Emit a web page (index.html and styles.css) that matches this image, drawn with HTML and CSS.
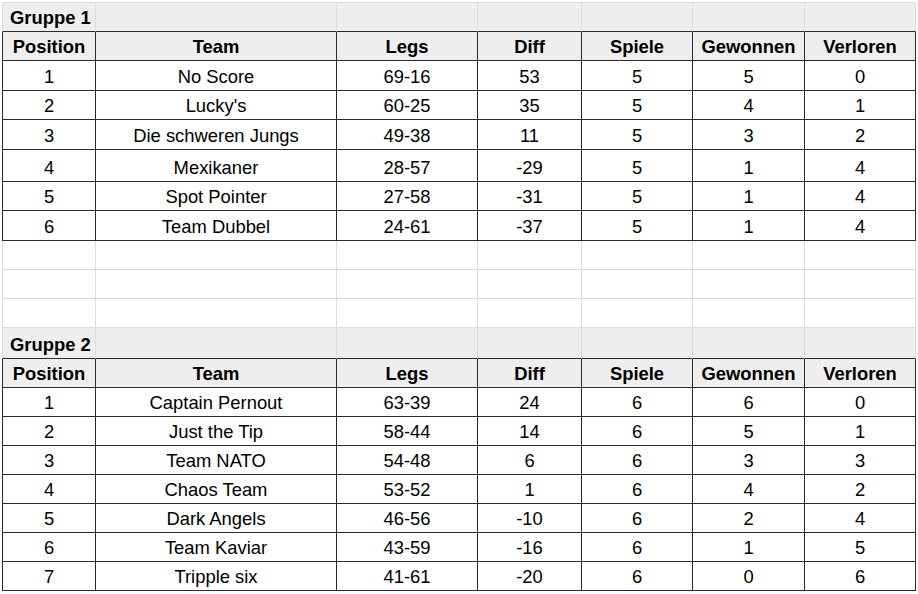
FILE: index.html
```html
<!DOCTYPE html>
<html lang="de">
<head>
<meta charset="utf-8">
<title>Gruppen</title>
<link rel="stylesheet" href="styles.css">
</head>
<body>
<div class="sheet">
  <div class="row band first h30">
    <div class="cell title">Gruppe 1</div><div class="cell"></div><div class="cell"></div><div class="cell"></div><div class="cell"></div><div class="cell"></div><div class="cell"></div>
  </div>
  <div class="row t head h29">
    <div class="cell">Position</div><div class="cell">Team</div><div class="cell">Legs</div><div class="cell">Diff</div><div class="cell">Spiele</div><div class="cell">Gewonnen</div><div class="cell">Verloren</div>
  </div>
  <div class="row t h30"><div class="cell">1</div><div class="cell">No Score</div><div class="cell">69-16</div><div class="cell">53</div><div class="cell">5</div><div class="cell">5</div><div class="cell">0</div></div>
  <div class="row t h29"><div class="cell">2</div><div class="cell">Lucky's</div><div class="cell">60-25</div><div class="cell">35</div><div class="cell">5</div><div class="cell">4</div><div class="cell">1</div></div>
  <div class="row t h30"><div class="cell">3</div><div class="cell">Die schweren Jungs</div><div class="cell">49-38</div><div class="cell">11</div><div class="cell">5</div><div class="cell">3</div><div class="cell">2</div></div>
  <div class="row t h32"><div class="cell">4</div><div class="cell">Mexikaner</div><div class="cell">28-57</div><div class="cell">-29</div><div class="cell">5</div><div class="cell">1</div><div class="cell">4</div></div>
  <div class="row t h29"><div class="cell">5</div><div class="cell">Spot Pointer</div><div class="cell">27-58</div><div class="cell">-31</div><div class="cell">5</div><div class="cell">1</div><div class="cell">4</div></div>
  <div class="row t h30"><div class="cell">6</div><div class="cell">Team Dubbel</div><div class="cell">24-61</div><div class="cell">-37</div><div class="cell">5</div><div class="cell">1</div><div class="cell">4</div></div>
  <div class="row h29"><div class="cell"></div><div class="cell"></div><div class="cell"></div><div class="cell"></div><div class="cell"></div><div class="cell"></div><div class="cell"></div></div>
  <div class="row h29"><div class="cell"></div><div class="cell"></div><div class="cell"></div><div class="cell"></div><div class="cell"></div><div class="cell"></div><div class="cell"></div></div>
  <div class="row h29"><div class="cell"></div><div class="cell"></div><div class="cell"></div><div class="cell"></div><div class="cell"></div><div class="cell"></div><div class="cell"></div></div>
  <div class="row band h31">
    <div class="cell title">Gruppe 2</div><div class="cell"></div><div class="cell"></div><div class="cell"></div><div class="cell"></div><div class="cell"></div><div class="cell"></div>
  </div>
  <div class="row t head h29">
    <div class="cell">Position</div><div class="cell">Team</div><div class="cell">Legs</div><div class="cell">Diff</div><div class="cell">Spiele</div><div class="cell">Gewonnen</div><div class="cell">Verloren</div>
  </div>
  <div class="row t h29"><div class="cell">1</div><div class="cell">Captain Pernout</div><div class="cell">63-39</div><div class="cell">24</div><div class="cell">6</div><div class="cell">6</div><div class="cell">0</div></div>
  <div class="row t h29"><div class="cell">2</div><div class="cell">Just the Tip</div><div class="cell">58-44</div><div class="cell">14</div><div class="cell">6</div><div class="cell">5</div><div class="cell">1</div></div>
  <div class="row t h29"><div class="cell">3</div><div class="cell">Team NATO</div><div class="cell">54-48</div><div class="cell">6</div><div class="cell">6</div><div class="cell">3</div><div class="cell">3</div></div>
  <div class="row t h29"><div class="cell">4</div><div class="cell">Chaos Team</div><div class="cell">53-52</div><div class="cell">1</div><div class="cell">6</div><div class="cell">4</div><div class="cell">2</div></div>
  <div class="row t h29"><div class="cell">5</div><div class="cell">Dark Angels</div><div class="cell">46-56</div><div class="cell">-10</div><div class="cell">6</div><div class="cell">2</div><div class="cell">4</div></div>
  <div class="row t h29"><div class="cell">6</div><div class="cell">Team Kaviar</div><div class="cell">43-59</div><div class="cell">-16</div><div class="cell">6</div><div class="cell">1</div><div class="cell">5</div></div>
  <div class="row t h29"><div class="cell">7</div><div class="cell">Tripple six</div><div class="cell">41-61</div><div class="cell">-20</div><div class="cell">6</div><div class="cell">0</div><div class="cell">6</div></div>
</div>
</body>
</html>
```

FILE: styles.css
```css
:root {
  --grid: #dcdcdc;
  --dark: #2a2a2a;
  --band: #eeeeee;
}

html, body {
  margin: 0;
  padding: 0;
  background: #ffffff;
}

body {
  font-family: "Liberation Sans", Arial, sans-serif;
  font-size: 18.4px;
  color: #000000;
}

.sheet {
  padding: 2px 0 0 2px;
  display: flex;
  flex-direction: column;
}

.row {
  display: grid;
  grid-template-columns: 94px 241px 141px 104px 111px 112px 111px;
  width: 914px;
}

.h29 { height: 29px; }
.h30 { height: 30px; }
.h31 { height: 31px; }
.h32 { height: 32px; }

.cell {
  box-sizing: border-box;
  border-right: 1px solid var(--grid);
  border-bottom: 1px solid var(--grid);
  display: flex;
  align-items: flex-end;
  justify-content: center;
  line-height: 1;
  padding-bottom: 4px;
  white-space: nowrap;
  overflow: hidden;
}

.cell:first-child {
  border-left: 1px solid var(--grid);
}

.first .cell {
  border-top: 1px solid var(--grid);
}

.band .cell {
  background: var(--band);
  border-bottom-color: var(--dark);
}

.title {
  justify-content: flex-start;
  padding-left: 7px;
  font-weight: bold;
}

.t .cell {
  border-right-color: var(--dark);
  border-bottom-color: var(--dark);
}

.t .cell:first-child {
  border-left-color: var(--dark);
}

.head .cell {
  background: var(--band);
  font-weight: bold;
}
```
